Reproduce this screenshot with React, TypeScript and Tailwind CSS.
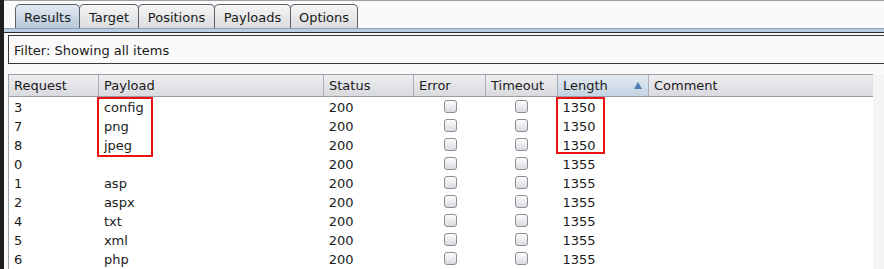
import React from "react";

const cols = [
  { name: "Request", w: 90 },
  { name: "Payload", w: 225 },
  { name: "Status", w: 90 },
  { name: "Error", w: 72 },
  { name: "Timeout", w: 72 },
  { name: "Length", w: 91 },
  { name: "Comment", w: 225 },
];

const rows: [string, string, string, string][] = [
  ["3", "config", "200", "1350"],
  ["7", "png", "200", "1350"],
  ["8", "jpeg", "200", "1350"],
  ["0", "", "200", "1355"],
  ["1", "asp", "200", "1355"],
  ["2", "aspx", "200", "1355"],
  ["4", "txt", "200", "1355"],
  ["5", "xml", "200", "1355"],
  ["6", "php", "200", "1355"],
];

const tabs = [
  { name: "Results", w: 65 },
  { name: "Target", w: 60 },
  { name: "Positions", w: 77 },
  { name: "Payloads", w: 77 },
  { name: "Options", w: 68 },
];

function Check() {
  return (
    <div className="w-[13px] h-[13px] rounded-[3px] border border-[#8b8e95] bg-gradient-to-b from-[#fdfdfd] to-[#d9dbe0]" />
  );
}

export default function App() {
  return (
    <div
      className="flex w-[884px] h-[269px] overflow-hidden text-[13px] text-[#1a1a1a]"
      style={{ fontFamily: '"DejaVu Sans", "Liberation Sans", sans-serif' }}
    >
      <div className="w-[4px] shrink-0 bg-[#1f1f1f]" />
      <div className="flex-1 flex flex-col bg-[#fafafa] border-t border-[#9a9ea6] min-w-0">
        {/* tabs */}
        <div className="flex items-end h-[27px] pl-[11px]">
          {tabs.map((t, i) => (
            <div
              key={t.name}
              style={{ width: t.w }}
              className={
                "shrink-0 flex items-center justify-center border border-b-0 border-[#5d6068] rounded-t-[5px] -mr-px pt-px " +
                (i === 0
                  ? "h-[24px] bg-gradient-to-b from-[#e3eaf2] to-[#b7c9da]"
                  : "h-[24px] bg-gradient-to-b from-[#f6f6f6] to-[#dadbdd]")
              }
            >
              <span className="leading-none">{t.name}</span>
            </div>
          ))}
        </div>
        <div className="h-[4px] bg-[#b9cde2] border-t border-[#8ea1b6]" />
        <div className="h-px bg-[#2b2b2b]" />
        <div className="h-[2px]" />
        {/* filter */}
        <div className="ml-[4px] h-[29px] border border-r-0 border-[#3a3a3a] bg-[#fafafa] flex items-center pl-[5px] pt-[2px]">
          Filter: Showing all items
        </div>
        <div className="h-[10px]" />
        {/* table */}
        <div className="relative ml-[4px] flex-1 flex">
          <div className="w-[865px] shrink-0 bg-white border-l border-[#a0a3a8]">
            <div className="flex h-[23px] border-t border-b border-[#9a9da3]">
              {cols.map((c, i) => (
                <div
                  key={c.name}
                  style={{ width: c.w }}
                  className={
                    "shrink-0 flex items-center pl-[5px] border-r border-[#a9acb2] " +
                    (c.name === "Length"
                      ? "bg-gradient-to-b from-[#e4ebf2] to-[#c3d3e2] justify-between pr-[6px]"
                      : "bg-gradient-to-b from-[#eeeef1] to-[#d9dade]") +
                    (i === cols.length - 1 ? " border-[#8e9197]" : "")
                  }
                >
                  <span>{c.name}</span>
                  {c.name === "Length" && (
                    <svg width="8" height="7" viewBox="0 0 8 7">
                      <path d="M4 0 L8 7 L0 7 Z" fill="#4d7db2" />
                    </svg>
                  )}
                </div>
              ))}
            </div>
            {rows.map((r) => (
              <div key={r[0]} className="flex h-[19px] items-center">
                <div className="w-[90px] pl-[5px] pt-[2px]">{r[0]}</div>
                <div className="w-[225px] pl-[5px] pt-[2px]">{r[1]}</div>
                <div className="w-[90px] pl-[5px] pt-[2px]">{r[2]}</div>
                <div className="w-[72px] flex justify-center pl-px">
                  <Check />
                </div>
                <div className="w-[72px] flex justify-center pl-px">
                  <Check />
                </div>
                <div className="w-[91px] pl-[5px] pt-[2px]">{r[3]}</div>
                <div className="w-[225px]" />
              </div>
            ))}
          </div>
          <div className="flex-1 bg-[#f4f4f4]" />
          {/* highlight boxes */}
          <div className="absolute left-[89px] top-[23px] w-[56px] h-[60px] border-2 border-[#ee1111]" />
          <div className="absolute left-[548px] top-[23px] w-[49px] h-[57px] border-2 border-[#ee1111]" />
        </div>
      </div>
    </div>
  );
}
